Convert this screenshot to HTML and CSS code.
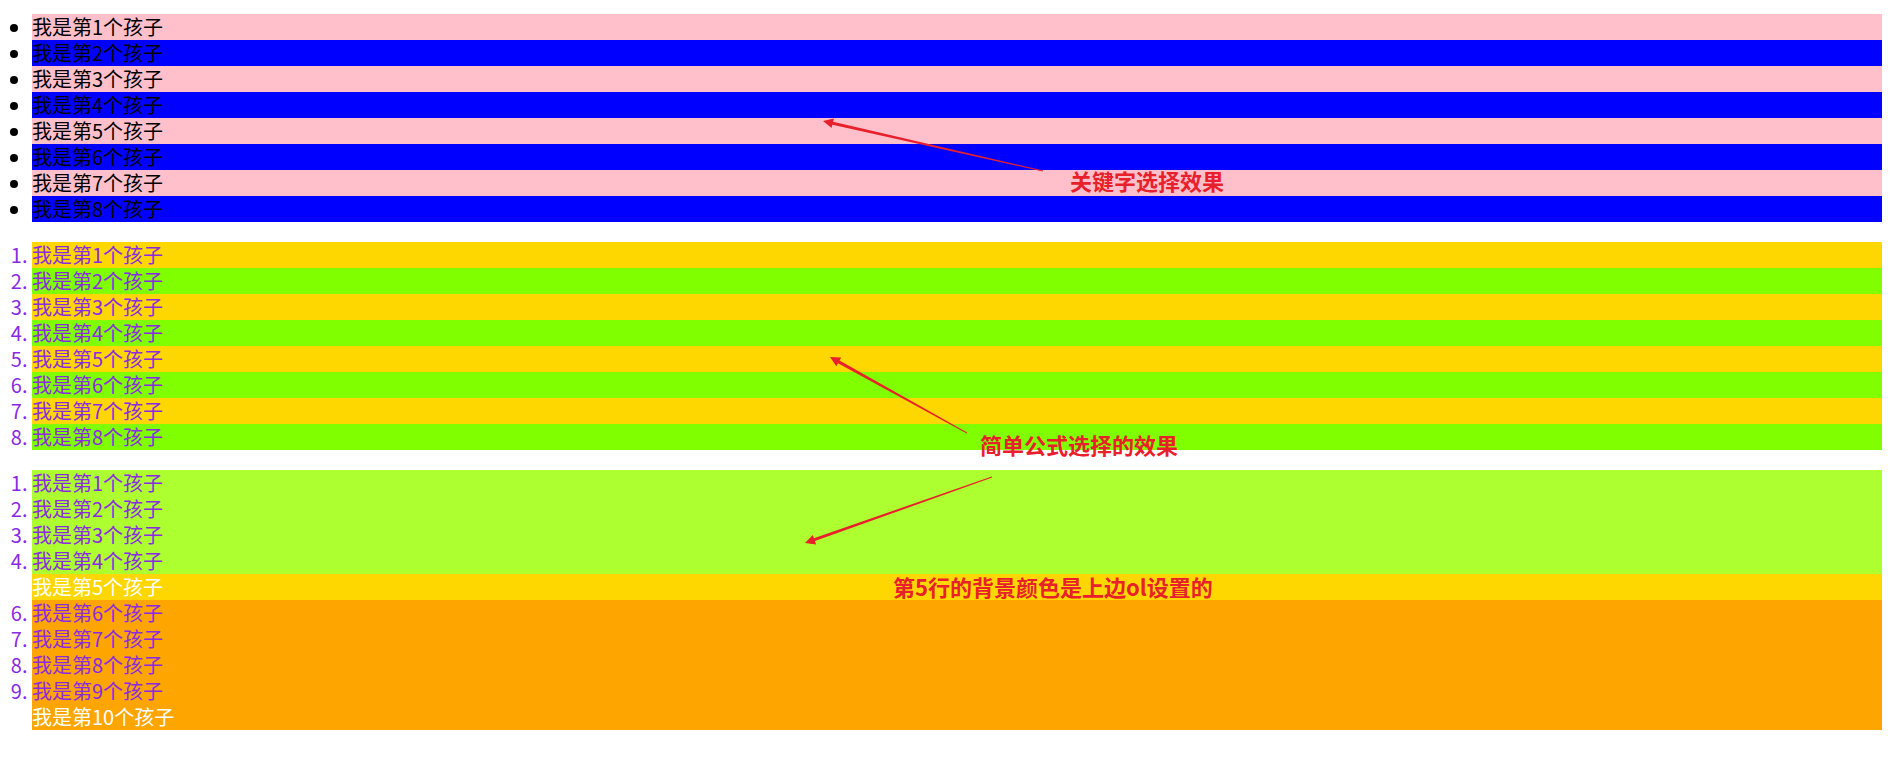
FILE: index.html
```html
<!DOCTYPE html>
<html lang="zh-CN">
<head>
<meta charset="utf-8">
<title>nth-child</title>
<link rel="stylesheet" href="styles.css">
</head>
<body>
<ul class="list list-keyword">
  <li>我是第1个孩子</li>
  <li>我是第2个孩子</li>
  <li>我是第3个孩子</li>
  <li>我是第4个孩子</li>
  <li>我是第5个孩子</li>
  <li>我是第6个孩子</li>
  <li>我是第7个孩子</li>
  <li>我是第8个孩子</li>
</ul>
<ol class="list list-formula">
  <li>我是第1个孩子</li>
  <li>我是第2个孩子</li>
  <li>我是第3个孩子</li>
  <li>我是第4个孩子</li>
  <li>我是第5个孩子</li>
  <li>我是第6个孩子</li>
  <li>我是第7个孩子</li>
  <li>我是第8个孩子</li>
</ol>
<ol class="list list-range">
  <li>我是第1个孩子</li>
  <li>我是第2个孩子</li>
  <li>我是第3个孩子</li>
  <li>我是第4个孩子</li>
  <li>我是第5个孩子</li>
  <li>我是第6个孩子</li>
  <li>我是第7个孩子</li>
  <li>我是第8个孩子</li>
  <li>我是第9个孩子</li>
  <li>我是第10个孩子</li>
</ol>

<svg class="arrows" width="1892" height="769" viewBox="0 0 1892 769">
  <polygon points="1043.1,170.5 833.1,121.8 833.9,118.4 823,121 831.6,128.1 832.4,124.7 1042.9,171.5"/>
  <polygon points="967.2,432.6 839.5,360.5 841.2,357.5 830,357 836.3,366.2 838,363.2 966.8,433.4"/>
  <polygon points="992.2,477.5 814.9,541.1 816.1,544.4 805,543 812.8,535 813.9,538.3 991.8,476.5"/>
</svg>
<div class="note note-1">关键字选择效果</div>
<div class="note note-2">简单公式选择的效果</div>
<div class="note note-3">第5行的背景颜色是上边ol设置的</div>
</body>
</html>
```
FILE: styles.css
```css
html, body {
  margin: 0;
  padding: 0;
  background: #ffffff;
}

body {
  position: relative;
  padding: 14px 10px 0 0;
  font-family: "Noto Sans CJK SC", "Noto Sans", sans-serif;
  font-size: 20px;
  line-height: 26px;
  color: #000;
}

.list {
  margin: 0 0 20px 0;
  padding: 0 0 0 32px;
}

.list li {
  height: 26px;
}

.list-keyword li:nth-child(odd) { background: #ffc0cb; }
.list-keyword li:nth-child(even) { background: #0000ff; }

.list-formula,
.list-range {
  color: #8a2be2;
}

.list-formula li:nth-child(2n+1) { background: #ffd700; }
.list-formula li:nth-child(2n) { background: #7fff00; }

.list-range li:nth-child(-n+4) { background: #adff2f; }
.list-range li:nth-child(n+5) { background: #ffa500; }
.list-range li:nth-child(5) { background: #ffd700; }
.list-range li:nth-child(5n) {
  color: #ffffff;
  list-style: none;
}

.arrows {
  position: absolute;
  left: 0;
  top: 0;
  pointer-events: none;
}

.arrows polygon {
  fill: #e8202c;
}

.note {
  position: absolute;
  font-family: "Noto Sans CJK SC", "Noto Sans", sans-serif;
  font-weight: bold;
  font-size: 22px;
  line-height: 22px;
  color: #e8202c;
  white-space: nowrap;
}

.note-1 { left: 1070px; top: 169px; }
.note-2 { left: 980px; top: 433px; }
.note-3 { left: 893px; top: 575px; }
```
